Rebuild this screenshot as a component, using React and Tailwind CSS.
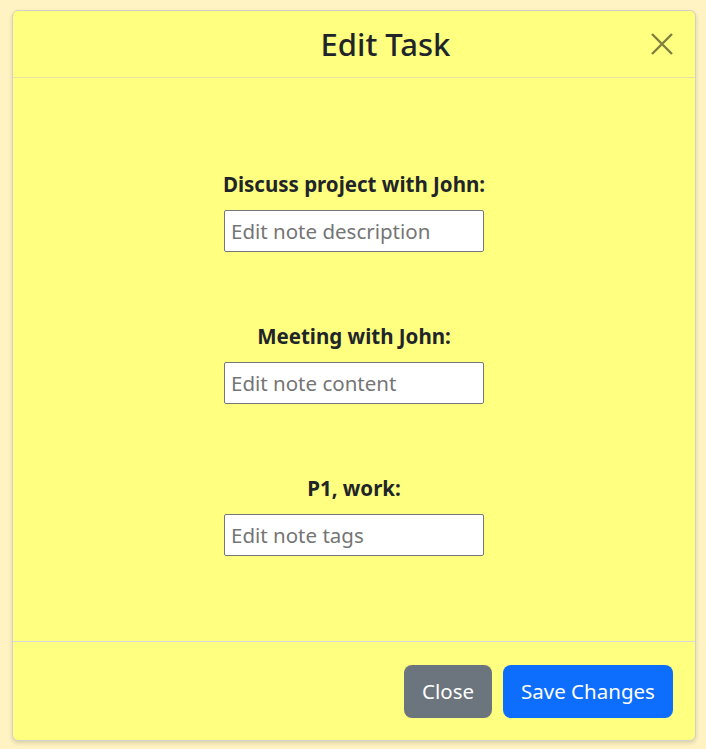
import React from "react";

export default function App() {
  const fields = [
    { label: "Discuss project with John:", ph: "Edit note description" },
    { label: "Meeting with John:", ph: "Edit note content" },
    { label: "P1, work:", ph: "Edit note tags" },
  ];
  return (
    <div
      className="w-[706px] h-[749px] bg-[#fff3c4] pt-[10px] pl-[12px]"
      style={{ fontFamily: '"Noto Sans", "Open Sans", sans-serif' }}
    >
      <div className="w-[684px] h-[731px] bg-[#ffff80] border border-[#d2d2c8] rounded-[6px] shadow-[0_2px_4px_rgba(0,0,0,0.15)] flex flex-col">
        <div className="h-[67px] flex items-center border-b border-[#e6e2a8] shrink-0">
          <div className="flex-1 text-center pl-[108px] text-[31px] font-medium leading-none text-[#212529]">
            Edit Task
          </div>
          <button className="w-[24px] h-[24px] mr-[21px] flex items-center justify-center">
            <svg width="24" height="24" viewBox="0 0 24 24">
              <path
                d="M2 2 L22 22 M22 2 L2 22"
                stroke="#7f7f40"
                strokeWidth="2.4"
                fill="none"
              />
            </svg>
          </button>
        </div>
        <div className="flex-1 flex flex-col items-center pt-[91px] gap-[69px]">
          {fields.map((f) => (
            <div key={f.label} className="flex flex-col items-center">
              <div className="h-[30px] leading-[30px] text-[20.5px] font-bold text-[#212529]">
                {f.label}
              </div>
              <input
                placeholder={f.ph}
                className="mt-[11px] w-[260px] h-[42px] bg-white border border-[#767676] rounded-[2px] px-[6px] text-[20.5px] placeholder-[#757575] outline-none"
                style={{ fontFamily: '"Noto Sans", "Open Sans", sans-serif' }}
              />
            </div>
          ))}
        </div>
        <div className="h-[99px] border-t border-[#d8dae0] flex justify-end items-start pt-[23px] pr-[22px] gap-[11px] shrink-0">
          <button className="h-[53px] w-[88px] rounded-[8px] bg-[#6c757d] text-white text-[20.5px]">
            Close
          </button>
          <button className="h-[53px] w-[170px] rounded-[8px] bg-[#0d6efd] text-white text-[20.5px]">
            Save Changes
          </button>
        </div>
      </div>
    </div>
  );
}
